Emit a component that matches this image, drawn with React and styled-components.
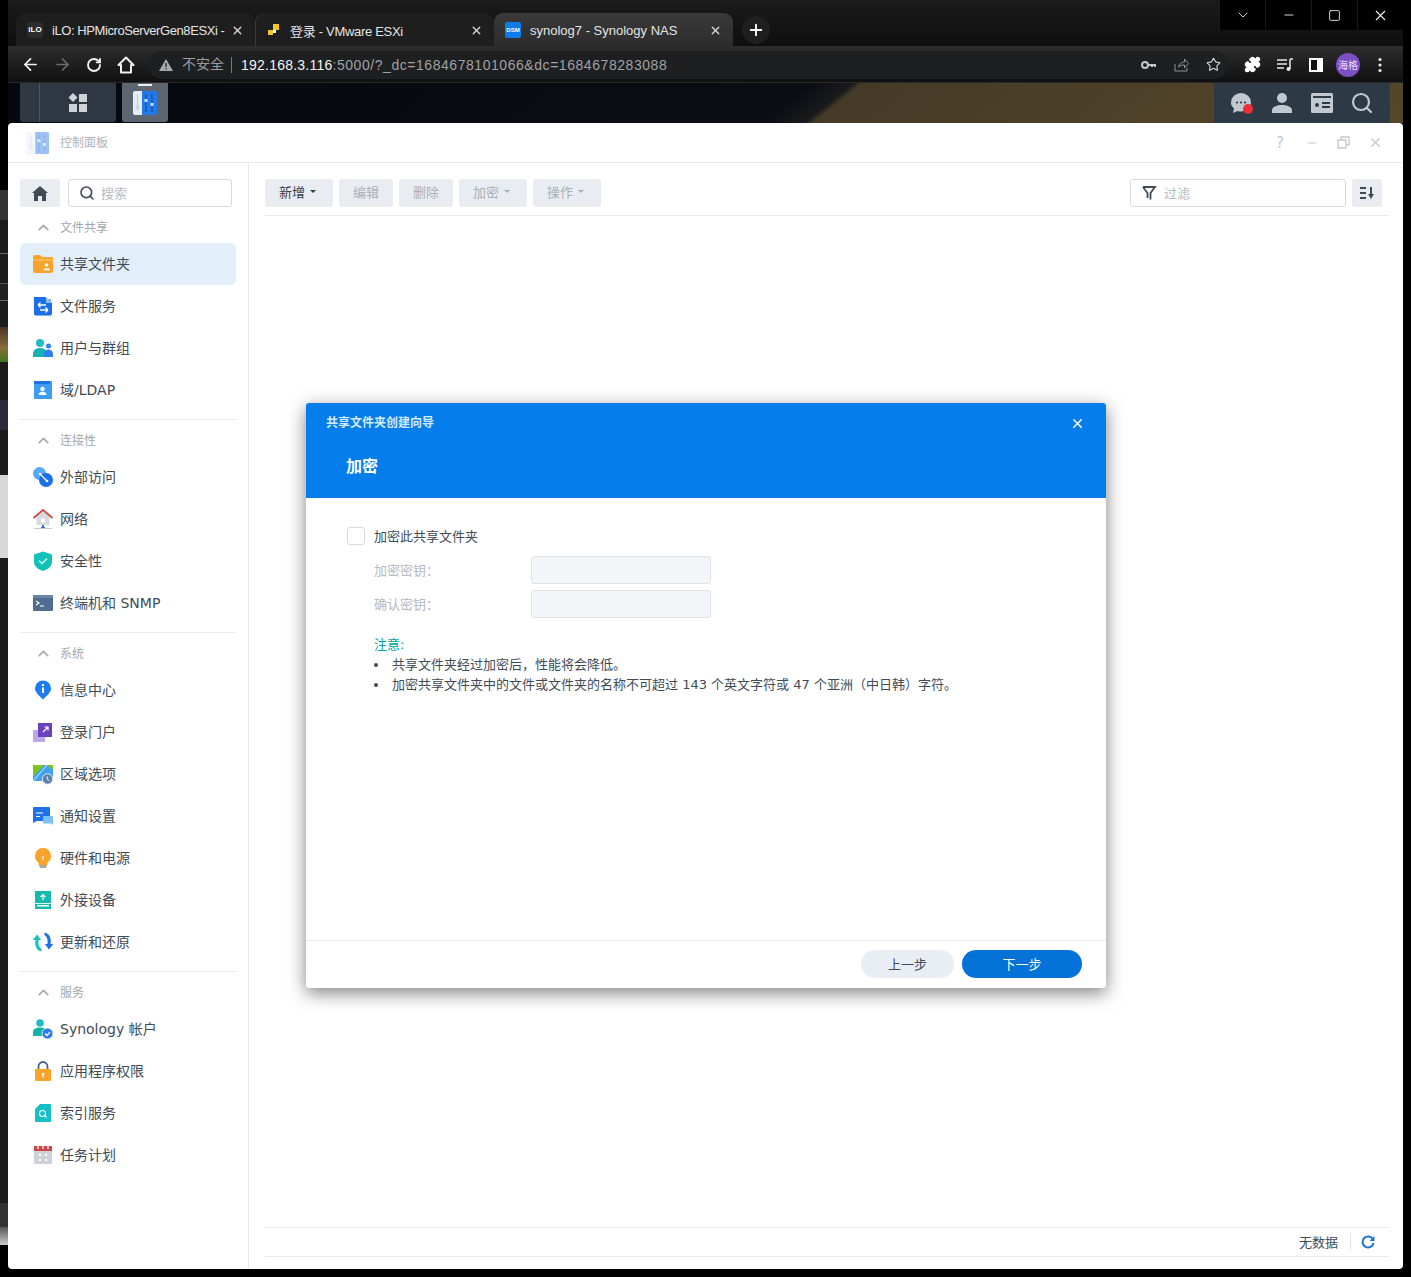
import React from 'react';
import styled, { createGlobalStyle } from 'styled-components';
import { ArrowLeft, ArrowRight, RotateCw, Star, Puzzle, Search, X, Plus, Minus, Square, ChevronDown, ChevronUp } from 'lucide-react';

const CJK = '"DejaVu Sans", "Noto Sans CJK SC", sans-serif';
const CHROME = '"Liberation Sans", "Noto Sans CJK SC", sans-serif';

const sideGroups = [
  { title: '文件共享', items: [['共享文件夹', 'folder'], ['文件服务', 'fileService'], ['用户与群组', 'users'], ['域/LDAP', 'ldap']] },
  { title: '连接性', items: [['外部访问', 'external'], ['网络', 'network'], ['安全性', 'shield'], ['终端机和 SNMP', 'terminal']] },
  { title: '系统', items: [['信息中心', 'info'], ['登录门户', 'portal'], ['区域选项', 'region'], ['通知设置', 'notify'], ['硬件和电源', 'bulb'], ['外接设备', 'device'], ['更新和还原', 'update']] },
  { title: '服务', items: [['Synology 帐户', 'account'], ['应用程序权限', 'lock'], ['索引服务', 'index'], ['任务计划', 'calendar']] },
];

const leftStrips = [
  [190, '#000'], [30, '#333'], [33, '#1c1c1c'], [1, '#666'], [29, '#1c1c1c'], [1, '#555'], [16, '#222'], [1, '#666'], [26, '#1c1c1c'],
  [35, 'linear-gradient(#4a3327, #8a6a3a 60%, #3f7a1c)'], [38, '#1c1c1c'], [30, '#2a2a3a'], [45, '#1c1c1c'], [83, '#d8d8d8'],
  [645, '#1c1c1c'], [24, '#333'], [18, 'linear-gradient(#555, #ccc)'], [32, '#000'],
];

function SideIcon({ name }) {
  const icons = {
    folder: <>
      <path d="M1 4a2 2 0 0 1 2-2h5l2 2h10a1 1 0 0 1 1 1v13a2 2 0 0 1-2 2H3a2 2 0 0 1-2-2z" fill="#f9a32a" />
      <path d="M1 6h20v2H1z" fill="#fbb84f" />
      <circle cx="14.500" cy="12" r="1.800" fill="#fff" /><rect x="11.500" y="15.500" width="6" height="1.800" fill="#fff" />
    </>,
    fileService: <>
      <path d="M3 4h16v17H3z" fill="#7fb4f5" />
      <path d="M2 2h11l7 6v11a1 1 0 0 1-1 1H3a1 1 0 0 1-1-1z" fill="#1c6fe8" />
      <path d="M14 2l6 6h-6z" fill="#8dbcf7" />
      <path d="M6 10h8M6 10l2.500-2.500M6 10l2.500 2.500M16 15H8M16 15l-2.500-2.500M16 15l-2.500 2.500" stroke="#fff" strokeWidth="1.300" fill="none" />
    </>,
    users: <>
      <circle cx="8" cy="6" r="4" fill="#1fbcc6" /><path d="M1 20v-3c0-4 3-6 7-6s7 2 7 6v3z" fill="#17b3b0" />
      <circle cx="16.500" cy="9" r="2.500" fill="#2f80ed" /><path d="M12 20v-3c0-3 2-4.500 4.500-4.500S21 14 21 17v3z" fill="#2f80ed" />
    </>,
    ldap: <>
      <path d="M2 3a1 1 0 0 1 1-1h16a1 1 0 0 1 1 1v17H3a1 1 0 0 1-1-1z" fill="#3d9df6" />
      <path d="M2 2h16v3H2z" fill="#1c72de" />
      <circle cx="10.500" cy="10" r="2.200" fill="#fff" /><path d="M6.500 16c0-2.500 2-3.200 4-3.200s4 .7 4 3.200z" fill="#fff" />
    </>,
    external: <>
      <circle cx="7.500" cy="7.500" r="6.500" fill="#55aaf5" /><circle cx="14" cy="14" r="7" fill="#1c6fe8" />
      <path d="M8 8l7 7" stroke="#fff" strokeWidth="1.300" /><circle cx="8" cy="8" r="1.300" fill="#fff" /><circle cx="15" cy="15" r="1.300" fill="#fff" />
    </>,
    network: <>
      <path d="M4.500 9L11 3.500 17.500 9v8h-13z" fill="#d8dade" /><path d="M1.500 10L11 2l9.500 8" stroke="#c9504c" strokeWidth="2" fill="none" />
      <rect x="9" y="10.500" width="4" height="4" fill="#fff" />
      <path d="M11 17v2" stroke="#2f6fc8" strokeWidth="2" /><path d="M9 19h4v1.500H9z" fill="#2f6fc8" /><path d="M2 20.500h18" stroke="#c4ccd6" />
    </>,
    shield: <>
      <path d="M11 1.500l9 3v7c0 5-4 8-9 9.500-5-1.500-9-4.500-9-9.500v-7z" fill="#12c2b9" />
      <path d="M7 10.500l3 3 5-5" stroke="#bdf3ef" strokeWidth="1.600" fill="none" />
    </>,
    terminal: <>
      <rect x="1" y="3" width="20" height="16" rx="1" fill="#4e6d90" /><path d="M1 3h20v3H1z" fill="#6785a6" />
      <path d="M4 9l3 2-3 2M8 14h4" stroke="#fff" strokeWidth="1.100" fill="none" />
    </>,
    info: <>
      <path d="M11 20.500C7.500 17 3 13.500 3 9.500a8 8 0 0 1 16 0c0 4-4.500 7.500-8 11z" fill="#1d7cf2" />
      <circle cx="11" cy="6" r="1.200" fill="#fff" /><rect x="10" y="8.500" width="2" height="5.500" fill="#fff" />
    </>,
    portal: <>
      <rect x="1" y="9" width="12" height="12" fill="#bda6ea" /><rect x="6" y="2" width="14" height="14" fill="#6c41c0" />
      <path d="M11 11l5-5M12.500 6H16v3.500" stroke="#fff" strokeWidth="1.200" fill="none" />
    </>,
    region: <>
      <path d="M1 2h20v16H1z" fill="#3fa3ee" />
      <path d="M1 2h11L1 14z" fill="#7fc31c" /><path d="M15 2h6v5z" fill="#7fc31c" />
      <path d="M1 18L15 2" stroke="#fff" strokeWidth=".8" />
      <circle cx="15.500" cy="16" r="5.200" fill="#5d80ad" stroke="#fff" strokeWidth=".8" />
      <path d="M15 13.500l.5 3 1.500 1" stroke="#fff" strokeWidth="1" fill="none" />
    </>,
    notify: <>
      <path d="M1 3a1 1 0 0 1 1-1h15a1 1 0 0 1 1 1v13H5l-4 2z" fill="#1c72e6" />
      <path d="M4 8h7M4 11.500h4" stroke="#fff" strokeWidth="1.200" />
      <path d="M11 12a1 1 0 0 1 1-1h8a1 1 0 0 1 1 1v8l-2-1.500h-7a1 1 0 0 1-1-1z" fill="#7cc0f7" />
    </>,
    bulb: <>
      <path d="M11 1a8 8 0 0 1 4.500 14.600V18h-9v-2.400A8 8 0 0 1 11 1z" fill="#f9a32a" />
      <path d="M7 18h8l-1 3H8z" fill="#b5a89a" /><path d="M11 9v4" stroke="#fff" strokeWidth="1.200" />
    </>,
    device: <>
      <rect x="3" y="2" width="16" height="18" fill="#17b9ac" />
      <path d="M11 11V5.500M8.500 8L11 5.500 13.500 8" stroke="#fff" strokeWidth="1.200" fill="none" />
      <rect x="3" y="14" width="16" height="1" fill="#dff" /><rect x="5" y="16" width="12" height="1.500" fill="#fff" />
    </>,
    update: <>
      <path d="M9.500 20.500C4.500 19.500 2.500 15 3.500 9H.8L5 3.500 9.200 9H6.500c-.5 4.500 .5 7.500 3 9z" fill="#17c2bb" />
      <path d="M12.500 1.500c5 1 7 5.500 6 11.500h2.700L17 18.500 12.800 13h2.700c.5-4.500-.5-7.500-3-9z" fill="#1c72e6" />
    </>,
    account: <>
      <circle cx="8" cy="5" r="3.800" fill="#1fbcc6" /><path d="M1 18v-4c0-3 3-4.500 7-4.500s6 1 7 3V18z" fill="#14b3a6" />
      <circle cx="15.500" cy="15.500" r="5.500" fill="#2f7bed" stroke="#fff" strokeWidth=".8" />
      <path d="M13 15.500l2 2 3-3.500" stroke="#fff" strokeWidth="1.200" fill="none" />
    </>,
    lock: <>
      <path d="M6.500 10V6.500a4.500 4.500 0 0 1 9 0V10" stroke="#41618a" strokeWidth="1.800" fill="none" />
      <rect x="3" y="9" width="16" height="12" rx="1" fill="#f9a32a" />
      <circle cx="11" cy="14" r="1.300" fill="#fff" /><rect x="10.400" y="14" width="1.200" height="3.500" fill="#fff" />
    </>,
    index: <>
      <path d="M3 7l5-5h10a1 1 0 0 1 1 1v16a1 1 0 0 1-1 1H4a1 1 0 0 1-1-1z" fill="#17c0c6" />
      <circle cx="10.500" cy="11.500" r="3" stroke="#fff" strokeWidth="1.100" fill="none" /><path d="M12.700 13.700l2 2" stroke="#fff" strokeWidth="1.100" />
    </>,
    calendar: <>
      <rect x="2" y="2" width="18" height="18" fill="#ced1d6" /><path d="M2 2h18v5H2z" fill="#c9474a" />
      <path d="M6 1v4M11 1v4M16 1v4" stroke="#fff" strokeWidth="1.200" />
      <path d="M7 10h2v2H7zM13 10h2v2h-2zM7 15h2v2H7zM13 15h2v2h-2z" fill="#fff" />
    </>,
  };
  return <svg width="22" height="22" viewBox="0 0 22 22">{icons[name]}</svg>;
}

function PanelIcon({ size = 26 }) {
  return (
    <svg width={size} height={size} viewBox="0 0 26 26">
      <rect x="1" y="1" width="24" height="24" rx="2" fill="#2279ea" />
      <path d="M1 3a2 2 0 0 1 2-2h7v24H3a2 2 0 0 1-2-2z" fill="#e8eef7" />
      <path d="M5.500 5v16" stroke="#c2ccd9" strokeWidth="1" />
      <path d="M14 4v18M20 4v18" stroke="#0f4fae" strokeWidth="1.200" />
      <circle cx="5.500" cy="17" r="2.200" fill="#cfd6e0" /><rect x="12.500" y="9" width="3" height="3" fill="#bcdcff" /><rect x="18.500" y="13" width="3" height="3" fill="#bcdcff" />
    </svg>
  );
}

export default function App() {
  return (
    <Page>
      <GlobalStyle />
      <BackdropStrip>
        {leftStrips.map(([height, background], i) => (
          <StripPiece key={i} $h={height} $bg={background} />
        ))}
      </BackdropStrip>

      <Browser>
        <TabStrip>
          <Tab>
            <IloBadge>iLO</IloBadge>
            <TabTitle $tight={0.42}>iLO: HPMicroServerGen8ESXi -</TabTitle>
            <TabClose><X size={13} strokeWidth={2.5} /></TabClose>
          </Tab>
          <Tab $divided>
            <svg width="14" height="14" viewBox="0 0 14 14">
              <rect x="6" y="1" width="6" height="6" fill="#f7c52b" /><rect x="1" y="7" width="5" height="5" fill="#f7c52b" /><rect x="6" y="7" width="3" height="3" fill="#fff" />
            </svg>
            <TabTitle $tight={0.3}>登录 - VMware ESXi</TabTitle>
            <TabClose><X size={13} strokeWidth={2.5} /></TabClose>
          </Tab>
          <Tab $active>
            <DsmBadge>DSM</DsmBadge>
            <TabTitle>synolog7 - Synology NAS</TabTitle>
            <TabClose><X size={13} strokeWidth={2.5} /></TabClose>
          </Tab>
          <NewTab><Plus size={18} strokeWidth={2.5} /></NewTab>
          <WindowControls>
            <WindowControl><ChevronDown size={16} strokeWidth={1.3} /></WindowControl>
            <WindowControl><Minus size={14} strokeWidth={1.5} /></WindowControl>
            <WindowControl><Square size={13} strokeWidth={1.6} /></WindowControl>
            <WindowControl><X size={17} strokeWidth={1.5} /></WindowControl>
          </WindowControls>
        </TabStrip>

        <Toolbar>
          <NavIcon><ArrowLeft size={19} strokeWidth={2.2} /></NavIcon>
          <NavIcon $dim><ArrowRight size={19} strokeWidth={2} /></NavIcon>
          <NavIcon><RotateCw size={16} strokeWidth={2.8} /></NavIcon>
          <NavIcon>
            <svg width="18" height="18" viewBox="0 0 18 18">
              <path d="M9 1.500L16.500 9H14v7.500H4V9H1.500z" stroke="#f2f2f2" strokeWidth="2" fill="none" strokeLinejoin="round" />
            </svg>
          </NavIcon>
          <UrlBar>
            <svg width="16" height="14" viewBox="0 0 16 14">
              <path d="M8 1l7 12H1z" fill="#a9acaf" /><path d="M8 5v4M8 10.200v1.300" stroke="#222" strokeWidth="1.300" />
            </svg>
            <Insecure>不安全</Insecure>
            <UrlDivider />
            <UrlText>192.168.3.116<UrlRest>:5000/?_dc=1684678101066&amp;dc=1684678283088</UrlRest></UrlText>
            <UrlActions>
              <svg width="16" height="10" viewBox="0 0 16 10">
                <circle cx="4" cy="5" r="3" stroke="#c5c7c9" strokeWidth="2" fill="none" /><path d="M7 4h8v3h-2V6h-1v1h-2V6H7z" fill="#c5c7c9" />
              </svg>
              <svg width="17" height="17" viewBox="0 0 17 17">
                <path d="M2 8v7h12v-3M5.500 11c.5-3 3-5 6-5V3l4 4.500-4 4.500V9c-2.500 0-4.500.5-6 2z" stroke="#8f9193" fill="none" />
              </svg>
              <Star size={15} color="#d5d6d8" strokeWidth={1.8} />
            </UrlActions>
          </UrlBar>
          <ToolIcons>
            <ToolSlot><Puzzle size={17} color="#fff" fill="#fff" /></ToolSlot>
            <ToolSlot>
              <svg width="17" height="14" viewBox="0 0 17 14">
                <path d="M1 2h10M1 6h10M1 10h7" stroke="#e8e8e8" strokeWidth="1.500" /><path d="M14 1v10" stroke="#e8e8e8" strokeWidth="1.500" /><path d="M14 1h3" stroke="#e8e8e8" strokeWidth="1.500" /><circle cx="12.500" cy="11" r="2" fill="#e8e8e8" />
              </svg>
            </ToolSlot>
            <ToolSlot>
              <svg width="14" height="14" viewBox="0 0 14 14">
                <rect width="14" height="14" fill="#fff" /><rect x="2" y="2" width="6" height="10" fill="#111" />
              </svg>
            </ToolSlot>
            <ToolSlot><Avatar>海格</Avatar></ToolSlot>
            <ToolSlot>
              <svg width="4" height="16" viewBox="0 0 4 16">
                <circle cx="2" cy="2.500" r="1.600" fill="#e8e8e8" /><circle cx="2" cy="8" r="1.600" fill="#e8e8e8" /><circle cx="2" cy="13.500" r="1.600" fill="#e8e8e8" />
              </svg>
            </ToolSlot>
          </ToolIcons>
        </Toolbar>

        <Taskbar>
          <MainMenu>
            <MenuGrid>
              <svg width="20" height="20" viewBox="0 0 20 20">
                <path d="M5 0l4.500 4.500L5 9 .5 4.500z" fill="#cfd3d8" />
                <rect x="11" y="1" width="8" height="8" fill="#cfd3d8" /><rect x="1" y="11" width="8" height="8" fill="#cfd3d8" /><rect x="11" y="11" width="8" height="8" fill="#cfd3d8" />
              </svg>
            </MenuGrid>
          </MainMenu>
          <AppButton><PanelIcon /></AppButton>
          <Tray>
            <svg width="24" height="24" viewBox="0 0 24 24">
              <path d="M11 2a10 9.500 0 0 1 10 9.500c0 5-4.500 9-10 9-1.500 0-2.500 0-3.500-.5L3 22l1-4.500C2 15.500 1 14 1 11.500A10 9.500 0 0 1 11 2z" fill="#c1c8d0" />
              <circle cx="7" cy="11.500" r="1.100" fill="#2e3946" /><circle cx="11" cy="11.500" r="1.100" fill="#2e3946" /><circle cx="15" cy="11.500" r="1.100" fill="#2e3946" />
              <circle cx="18" cy="18" r="5" fill="#ee2f37" />
            </svg>
            <svg width="22" height="22" viewBox="0 0 22 22">
              <circle cx="11" cy="6" r="5" fill="#c1c8d0" /><path d="M1 21v-3c0-3 5-5 10-5s10 2 10 5v3z" fill="#c1c8d0" />
            </svg>
            <svg width="22" height="20" viewBox="0 0 22 20">
              <rect width="22" height="20" rx="1.500" fill="#c1c8d0" /><path d="M2 3h18v2H2z" fill="#2e3946" /><circle cx="6" cy="12" r="2" fill="#2e3946" /><path d="M11 10h8M11 14h8" stroke="#2e3946" strokeWidth="1.800" />
            </svg>
            <Search size={24} color="#c1c8d0" strokeWidth={2.2} />
          </Tray>
        </Taskbar>

        <Window>
          <TitleBar>
            <FadedIcon><PanelIcon size={24} /></FadedIcon>
            <WindowTitle>控制面板</WindowTitle>
            <TitleActions>
              <TitleGlyph>?</TitleGlyph>
              <Minus size={14} />
              <svg width="13" height="13" viewBox="0 0 13 13">
                <path d="M1 4h8v8H1zM4 4V1h8v8H9" stroke="#c3c7cc" strokeWidth="1.300" fill="none" />
              </svg>
              <X size={15} />
            </TitleActions>
          </TitleBar>

          <WindowBody>
            <Sidebar>
              <SidebarTop>
                <HomeButton>
                  <svg width="16" height="15" viewBox="0 0 16 15">
                    <path d="M8 0l8 7h-2v8h-4v-5H6v5H2V7H0z" fill="#414b55" />
                  </svg>
                </HomeButton>
                <SearchBox>
                  <Search size={16} color="#414b55" strokeWidth={2.4} />
                  <Placeholder>搜索</Placeholder>
                </SearchBox>
              </SidebarTop>
              {sideGroups.map(group => (
                <SideGroup key={group.title}>
                  <GroupHeader>
                    <ChevronUp size={17} color="#a8adb3" strokeWidth={2.5} />
                    <RaisedText>{group.title}</RaisedText>
                  </GroupHeader>
                  {group.items.map(([label, icon]) => (
                    <SideItem key={label} $active={label === '共享文件夹'}>
                      <SideIcon name={icon} />
                      <RaisedText>{label}</RaisedText>
                    </SideItem>
                  ))}
                </SideGroup>
              ))}
            </Sidebar>

            <Main>
              <MainToolbar>
                <ToolButton $on>新增<Caret $on /></ToolButton>
                <ToolButton>编辑</ToolButton>
                <ToolButton>删除</ToolButton>
                <ToolButton>加密<Caret /></ToolButton>
                <ToolButton>操作<Caret /></ToolButton>
                <FilterBox>
                  <svg width="16" height="16" viewBox="0 0 16 16">
                    <path d="M2 2h12L9.500 8v6.500M6.500 13V8L2 2" stroke="#414b55" strokeWidth="1.800" fill="none" />
                  </svg>
                  <Placeholder>过滤</Placeholder>
                </FilterBox>
                <SortButton>
                  <svg width="16" height="14" viewBox="0 0 16 14">
                    <path d="M1 2h6M1 7h6M1 12h6" stroke="#414b55" strokeWidth="1.800" />
                    <path d="M12 1v8" stroke="#414b55" strokeWidth="2" /><path d="M9 8h6l-3 5z" fill="#414b55" />
                  </svg>
                </SortButton>
              </MainToolbar>
              <MainContent />
              <StatusBar>
                <RaisedText>无数据</RaisedText>
                <StatusDivider />
                <svg width="14" height="14" viewBox="0 0 14 14">
                  <path d="M12 4.500A5.500 5.500 0 1 0 12.500 8" stroke="#1c72d8" strokeWidth="2" fill="none" />
                  <path d="M13.500 1v5h-5z" fill="#1c72d8" />
                </svg>
              </StatusBar>
            </Main>
          </WindowBody>

          <Wizard>
            <WizardHead>
              <WizardRow>
                <WizardName>共享文件夹创建向导</WizardName>
                <X size={15} color="#fff" strokeWidth={2.4} />
              </WizardRow>
              <WizardStep>加密</WizardStep>
            </WizardHead>
            <WizardBody>
              <CheckRow>
                <CheckBox />
                <RaisedText>加密此共享文件夹</RaisedText>
              </CheckRow>
              <FieldRow>
                <FieldLabel>加密密钥：</FieldLabel>
                <FieldInput />
              </FieldRow>
              <FieldRow>
                <FieldLabel>确认密钥：</FieldLabel>
                <FieldInput />
              </FieldRow>
              <NoteTitle>注意:</NoteTitle>
              <NoteList>
                <NoteItem>共享文件夹经过加密后，性能将会降低。</NoteItem>
                <NoteItem>加密共享文件夹中的文件或文件夹的名称不可超过 143 个英文字符或 47 个亚洲（中日韩）字符。</NoteItem>
              </NoteList>
            </WizardBody>
            <WizardFoot>
              <PillButton>上一步</PillButton>
              <PillButton $primary>下一步</PillButton>
            </WizardFoot>
          </Wizard>
        </Window>
      </Browser>
    </Page>
  );
}

const GlobalStyle = createGlobalStyle`
  html, body { margin: 0; padding: 0; background: #000; }
  * { box-sizing: border-box; }
`;

const Page = styled.div`
  width: 1411px;
  height: 1277px;
  display: flex;
  background: #000;
  overflow: hidden;
  padding-right: 8px;
`;

const BackdropStrip = styled.div`
  width: 8px;
  display: flex;
  flex-direction: column;
  flex-shrink: 0;
`;

const StripPiece = styled.div`
  height: ${p => p.$h}px;
  background: ${p => p.$bg};
  flex-shrink: 0;
`;

const Browser = styled.div`
  flex: 1;
  display: flex;
  flex-direction: column;
  min-width: 0;
`;

const TabStrip = styled.div`
  height: 46px;
  position: relative;
  display: flex;
  align-items: flex-end;
  padding-left: 8px;
  background: linear-gradient(#1b1b1b, #0e0e0e);
`;

const Tab = styled.div`
  width: 239px;
  height: 33px;
  display: flex;
  align-items: center;
  gap: 9px;
  padding: 1px 11px 0 11px;
  border-radius: 9px 9px 0 0;
  color: #e4e4e4;
  font: 13px ${CHROME};
  background: ${p => (p.$active ? 'linear-gradient(#3a3a3a, #2c2c2c)' : '#1e1e1e')};
  border-left: ${p => (p.$divided ? '1px solid #3a3a3a' : 'none')};
`;

const IloBadge = styled.div`
  width: 16px;
  height: 16px;
  border-radius: 3px;
  background: #2c2c2c;
  color: #fff;
  font: bold 8px/16px ${CHROME};
  text-align: center;
  flex-shrink: 0;
`;

const DsmBadge = styled.div`
  width: 16px;
  height: 16px;
  border-radius: 2px;
  background: #0f7bea;
  color: #fff;
  font: bold 6px/16px ${CHROME};
  text-align: center;
  flex-shrink: 0;
`;

const TabTitle = styled.div`
  flex: 1;
  min-width: 0;
  white-space: nowrap;
  letter-spacing: ${p => (p.$tight ? `-${p.$tight}px` : 'normal')};
`;

const TabClose = styled.div`
  display: flex;
  color: #d4d4d4;
`;

const NewTab = styled.div`
  width: 28px;
  height: 28px;
  margin: 0 0 2px 9px;
  border-radius: 50%;
  background: #1f1f1f;
  color: #fff;
  display: flex;
  align-items: center;
  justify-content: center;
`;

const WindowControls = styled.div`
  position: absolute;
  top: 0;
  right: 0;
  height: 30px;
  display: flex;
  background: #000;
`;

const WindowControl = styled.div`
  width: 46px;
  display: flex;
  align-items: center;
  justify-content: center;
  color: #f2f2f2;
  border-left: 1px solid #1a1a1a;
`;

const Toolbar = styled.div`
  height: 37px;
  display: flex;
  align-items: center;
  padding: 1px 0 0 6px;
  background: linear-gradient(#2d2d2d, #101010);
  border-bottom: 1px solid #2a2a2a;
`;

const NavIcon = styled.div`
  width: 32px;
  display: flex;
  justify-content: center;
  color: ${p => (p.$dim ? '#6e6e6e' : '#f2f2f2')};
`;

const UrlBar = styled.div`
  width: 1080px;
  height: 28px;
  margin-left: 6px;
  padding: 0 7px 0 10px;
  display: flex;
  align-items: center;
  border-radius: 14px;
  background: #1d1f21;
  font: 14px ${CHROME};
`;

const Insecure = styled.span`
  margin-left: 8px;
  color: #9a9c9e;
  line-height: 26px;
  padding-bottom: 2px;
`;

const UrlDivider = styled.span`
  width: 1px;
  height: 16px;
  margin: 0 9px 0 7px;
  background: #77797b;
`;

const UrlText = styled.span`
  color: #f4f4f4;
  letter-spacing: 0.23px;
`;

const UrlRest = styled.span`
  color: #a0a2a4;
  letter-spacing: 0.55px;
`;

const UrlActions = styled.div`
  margin-left: auto;
  display: flex;
  align-items: center;
  gap: 16px;
`;

const ToolIcons = styled.div`
  margin-left: 8px;
  display: flex;
  align-items: center;
`;

const ToolSlot = styled.div`
  width: 32px;
  display: flex;
  align-items: center;
  justify-content: center;
`;

const Avatar = styled.div`
  width: 24px;
  height: 24px;
  flex-shrink: 0;
  border-radius: 50%;
  background: #7b4fc6;
  color: #e8dcff;
  font: 10px/24px "Noto Sans CJK SC", sans-serif;
  text-align: center;
`;

const Taskbar = styled.div`
  height: 40px;
  display: flex;
  padding-left: 12px;
  background: linear-gradient(141deg, #05080f 0, #0a0d14 505px, #191a1c 532px, #443a26 538px, #56472a 100%);
`;

const MainMenu = styled.div`
  width: 96px;
  height: 39px;
  border-radius: 0 0 3px 3px;
  background: #2e3742;
  padding-left: 19px;
  display: flex;
`;

const MenuGrid = styled.div`
  flex: 1;
  border-left: 1px solid #4b5560;
  display: flex;
  align-items: center;
  justify-content: center;
`;

const AppButton = styled.div`
  width: 46px;
  height: 39px;
  margin-left: 6px;
  border-radius: 0 0 3px 3px;
  background: #5d6570;
  display: flex;
  align-items: center;
  justify-content: center;
  position: relative;

  &::before {
    content: '';
    position: absolute;
    top: 1px;
    left: 16px;
    width: 14px;
    height: 2px;
    background: #eee;
  }
`;

const Tray = styled.div`
  width: 176px;
  margin: 0 13px 0 auto;
  background: #2e3946;
  display: flex;
  align-items: center;
  justify-content: space-between;
  padding: 0 16px;
`;

const Window = styled.div`
  height: 1146px;
  position: relative;
  display: flex;
  flex-direction: column;
  background: #fff;
  border-radius: 4px;
  font-family: ${CJK};
`;

const RaisedText = styled.span`
  padding-bottom: 2px;
`;

const TitleBar = styled.div`
  height: 40px;
  flex-shrink: 0;
  display: flex;
  align-items: center;
  padding: 0 20px 0 18px;
  border-bottom: 1px solid #e6e8ea;
`;

const FadedIcon = styled.div`
  display: flex;
  opacity: 0.45;
`;

const WindowTitle = styled.div`
  margin-left: 10px;
  padding-bottom: 2px;
  font-size: 12px;
  color: #aeb3b8;
`;

const TitleActions = styled.div`
  margin-left: auto;
  display: flex;
  align-items: center;
  gap: 18px;
  color: #c3c7cc;
`;

const TitleGlyph = styled.span`
  font-size: 15px;
  width: 14px;
  text-align: center;
`;

const WindowBody = styled.div`
  flex: 1;
  display: flex;
  min-height: 0;
`;

const Sidebar = styled.div`
  width: 241px;
  flex-shrink: 0;
  padding: 16px 12px 0;
  border-right: 1px solid #e6e8ea;
`;

const SidebarTop = styled.div`
  display: flex;
  gap: 8px;
  width: 212px;
`;

const HomeButton = styled.div`
  width: 40px;
  height: 28px;
  border-radius: 3px;
  background: #e9edf2;
  display: flex;
  align-items: center;
  justify-content: center;
`;

const SearchBox = styled.div`
  flex: 1;
  height: 28px;
  border: 1px solid #d7dbe0;
  border-radius: 3px;
  display: flex;
  align-items: center;
  gap: 6px;
  padding-left: 10px;
`;

const Placeholder = styled.span`
  padding-bottom: 2px;
  font-size: 13px;
  color: #b6bbc1;
`;

const SideGroup = styled.div`
  padding: 7px 0 8px;
  border-bottom: 1px solid #e8eaec;

  &:last-child {
    border-bottom: none;
  }
`;

const GroupHeader = styled.div`
  height: 26px;
  margin-bottom: 3px;
  padding-left: 15px;
  display: flex;
  align-items: center;
  gap: 8px;
  font-size: 12px;
  color: #a2a8ae;
`;

const SideItem = styled.div`
  height: 42px;
  display: flex;
  align-items: center;
  gap: 6px;
  padding-left: 12px;
  border-radius: 6px;
  font-size: 14px;
  color: #414b55;
  background: ${p => (p.$active ? '#e2effb' : 'transparent')};
`;

const Main = styled.div`
  flex: 1;
  min-width: 0;
  display: flex;
  flex-direction: column;
  padding: 16px 15px 12px 16px;
`;

const MainToolbar = styled.div`
  display: flex;
  gap: 6px;
  padding: 0 6px 8px 0;
  border-bottom: 1px solid #e6e8ea;
`;

const ToolButton = styled.div`
  height: 28px;
  padding: 0 14px 4px;
  display: flex;
  align-items: center;
  gap: 5px;
  border-radius: 3px;
  background: #e9edf2;
  font-size: 13px;
  color: ${p => (p.$on ? '#333d47' : '#a8b0b9')};
`;

const Caret = styled.span`
  width: 0;
  height: 0;
  margin-right: 3px;
  border-left: 3px solid transparent;
  border-right: 3px solid transparent;
  border-top: 3px solid ${p => (p.$on ? '#333d47' : '#a8b0b9')};
`;

const FilterBox = styled.div`
  width: 216px;
  height: 28px;
  margin-left: auto;
  border: 1px solid #d7dbe0;
  border-radius: 3px;
  display: flex;
  align-items: center;
  gap: 7px;
  padding-left: 10px;
`;

const SortButton = styled.div`
  width: 30px;
  height: 28px;
  border-radius: 3px;
  background: #e9edf2;
  display: flex;
  align-items: center;
  justify-content: center;
`;

const MainContent = styled.div`
  flex: 1;
`;

const StatusBar = styled.div`
  height: 30px;
  display: flex;
  align-items: center;
  justify-content: flex-end;
  padding-right: 13px;
  border-top: 1px solid #e6e8ea;
  border-bottom: 1px solid #e6e8ea;
  font-size: 13px;
  color: #414b55;
`;

const StatusDivider = styled.span`
  width: 1px;
  height: 18px;
  margin: 0 10px 0 12px;
  background: #e0e3e6;
`;

const Wizard = styled.div`
  position: absolute;
  left: 298px;
  top: 280px;
  width: 800px;
  height: 585px;
  display: flex;
  flex-direction: column;
  background: #fff;
  border-radius: 3px;
  box-shadow: 0 5px 18px rgba(0, 0, 0, 0.5);
`;

const WizardHead = styled.div`
  height: 95px;
  padding: 10px 20px 0;
  background: #057dea;
  border-radius: 3px 3px 0 0;
  color: #fff;
`;

const WizardRow = styled.div`
  display: flex;
  align-items: center;
  justify-content: space-between;
  padding-right: 1px;
  height: 20px;
`;

const WizardName = styled.div`
  padding-bottom: 4px;
  font-size: 12px;
  font-weight: 700;
  color: #d3ebff;
`;

const WizardStep = styled.div`
  margin: 22px 0 0 20px;
  font-size: 16px;
  font-weight: 700;
  line-height: 24px;
`;

const WizardBody = styled.div`
  flex: 1;
  padding: 28px 0 0 41px;
  font-size: 13px;
  color: #414b55;
`;

const CheckRow = styled.div`
  display: flex;
  align-items: center;
  gap: 9px;
  height: 20px;
`;

const CheckBox = styled.div`
  width: 18px;
  height: 18px;
  margin-left: 0;
  border: 1px solid #d7dbe0;
  border-radius: 3px;
`;

const FieldRow = styled.div`
  display: flex;
  align-items: center;
  height: 28px;
  margin: 6px 0 0 27px;

  ${CheckRow} + & {
    margin-top: 10px;
  }
`;

const FieldLabel = styled.div`
  width: 157px;
  padding-bottom: 2px;
  color: #b4b9bf;
`;

const FieldInput = styled.div`
  width: 180px;
  height: 28px;
  border: 1px solid #dde2e7;
  border-radius: 3px;
  background: #f3f6f9;
`;

const NoteTitle = styled.div`
  margin: 17px 0 0 27px;
  line-height: 20px;
  color: #00a39b;
`;

const NoteList = styled.ul`
  margin: 0 0 0 27px;
  padding: 0;
  list-style: none;
  line-height: 20px;
`;

const NoteItem = styled.li`
  display: flex;
  gap: 14px;

  &::before {
    content: '';
    flex-shrink: 0;
    width: 4px;
    height: 4px;
    margin: 8px 0 0 0;
    border-radius: 50%;
    background: #414b55;
  }
`;

const WizardFoot = styled.div`
  height: 48px;
  display: flex;
  align-items: flex-start;
  justify-content: flex-end;
  gap: 8px;
  padding: 9px 24px 0 0;
  border-top: 1px solid #e6e8ea;
`;

const PillButton = styled.div`
  width: ${p => (p.$primary ? '120px' : '93px')};
  height: 28px;
  border-radius: 14px;
  background: ${p => (p.$primary ? '#0572d8' : '#e9eef5')};
  color: ${p => (p.$primary ? '#fff' : '#414b55')};
  font-size: 13px;
  line-height: 29px;
  text-align: center;
`;
